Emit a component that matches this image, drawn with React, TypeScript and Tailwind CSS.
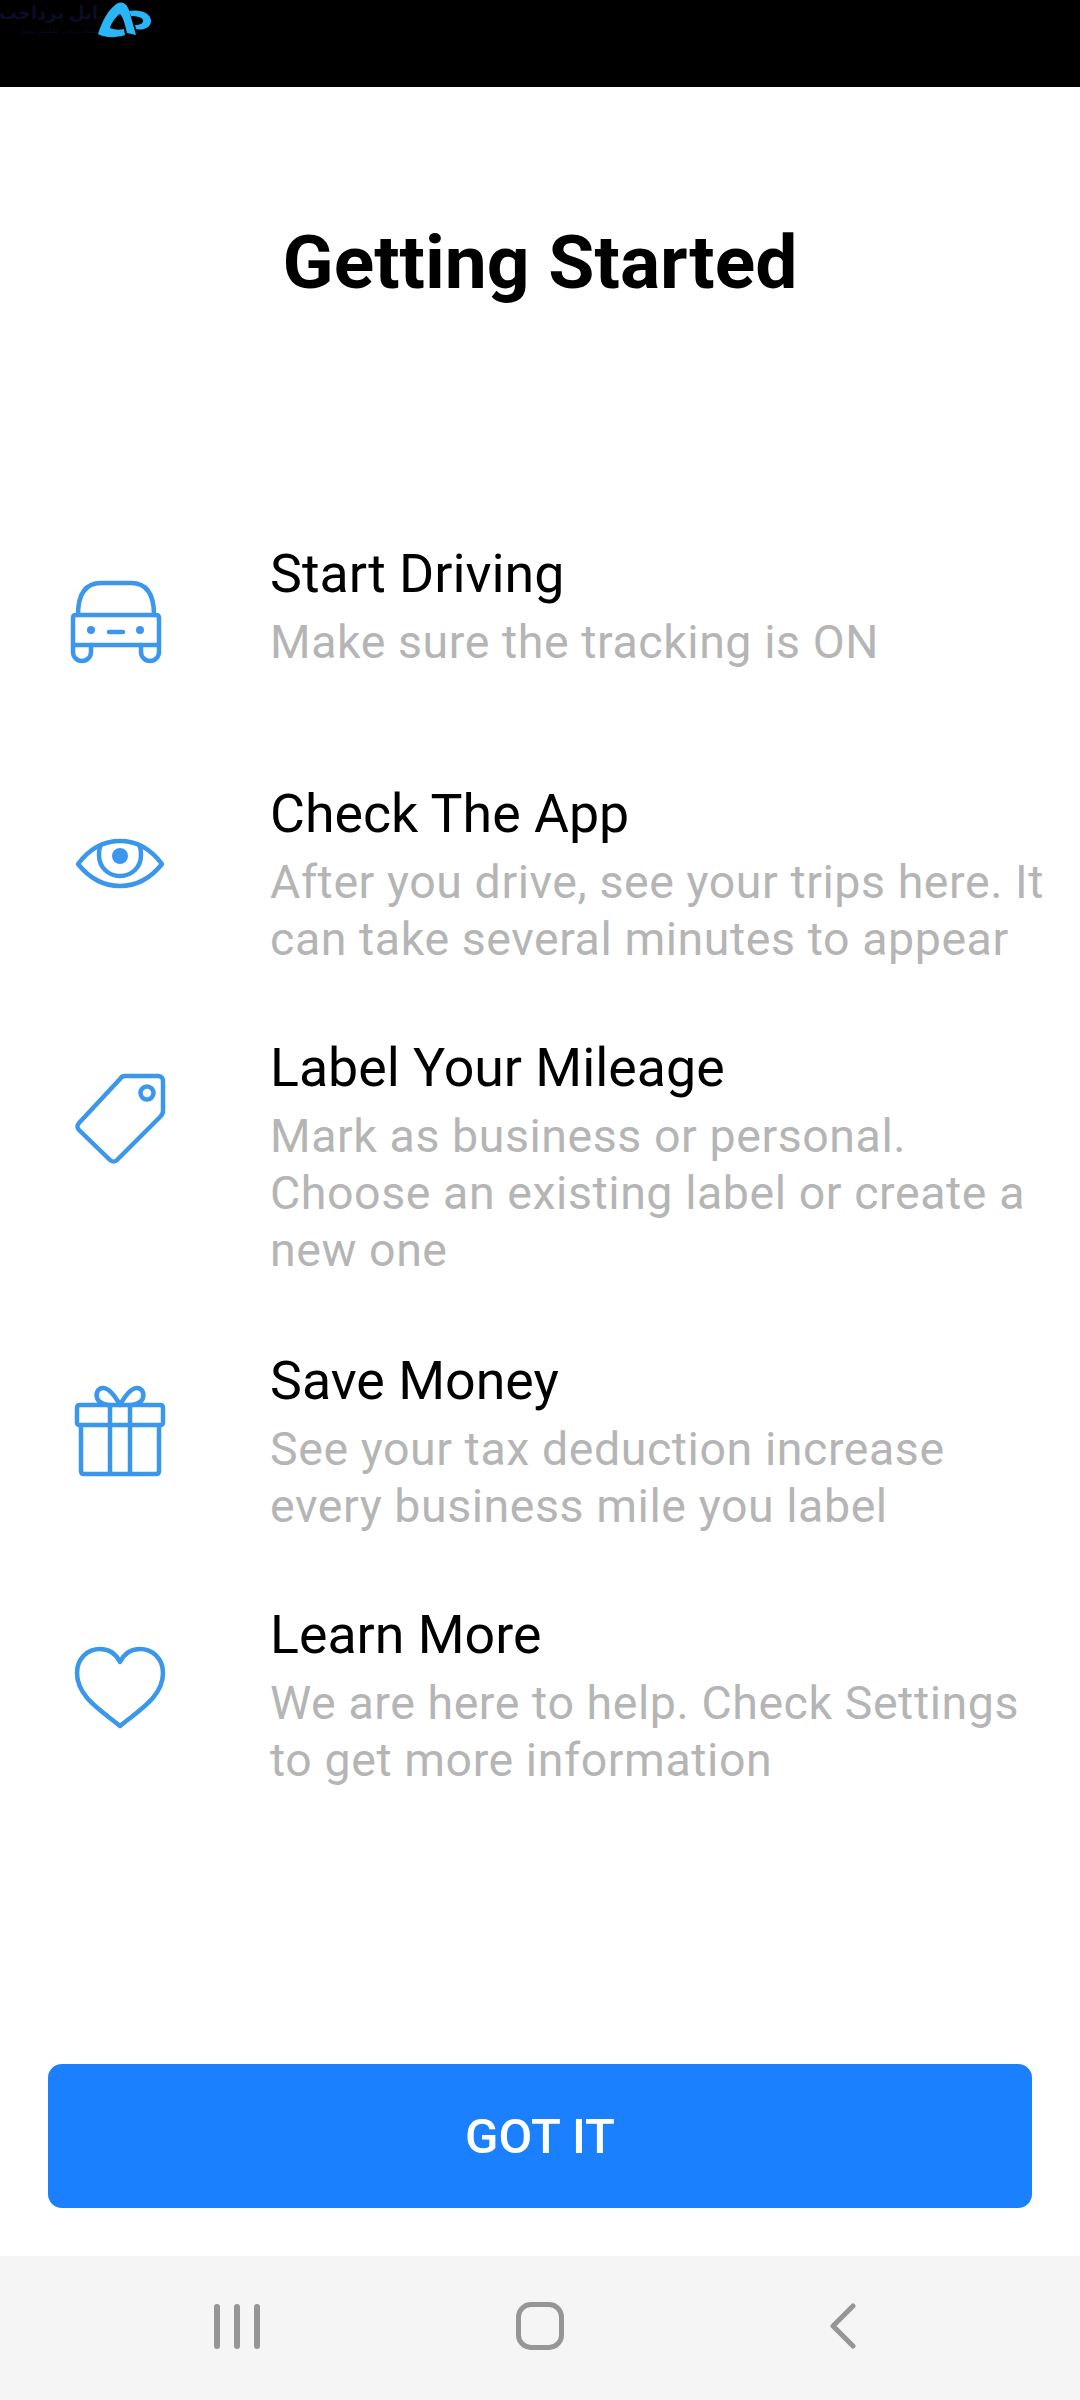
const ic = { fill: "none", stroke: "#3b97ec", strokeWidth: 4.5, strokeLinecap: "round" as const, strokeLinejoin: "round" as const };

function Car() {
  return (
    <svg width="100" height="90" viewBox="0 0 100 90" {...ic}>
      <path d="M13 38C13 18 20 6 36 6H66C82 6 89 18 89 38" />
      <path d="M8 41C8 39 9 38 11 38H91C93 38 94 39 94 41V68H8Z" />
      <path d="M8 68V75C8 80 12 84 17 84C22 84 26 80 26 75V68" />
      <path d="M76 68V75C76 80 80 84 85 84C90 84 94 80 94 75V68" />
      <circle cx="26" cy="53" r="4" fill="#3b97ec" stroke="none" />
      <circle cx="75" cy="53" r="4" fill="#3b97ec" stroke="none" />
      <path d="M44 55H58" />
    </svg>
  );
}
function Eye() {
  return (
    <svg width="100" height="60" viewBox="0 0 100 60" {...ic}>
      <path d="M8 29C20 13 35 6 50 6C65 6 80 13 92 29C80 44 65 51 50 51C35 51 20 44 8 29Z" />
      <path d="M31 10C29 13 29 17 29 20C29 32 38 41 50 41C62 41 71 32 71 20C71 17 71 13 69 10" />
      <circle cx="50" cy="21" r="8" fill="#3b97ec" stroke="none" />
    </svg>
  );
}
function Tag() {
  return (
    <svg width="100" height="100" viewBox="0 0 100 100" {...ic}>
      <path d="M9 53L50 9C51 7 53 6 55 6H88C91 6 93 8 93 11V41C93 43 92 45 90 47L47 90C45 92 42 92 40 90L9 60C7 58 7 55 9 53Z" />
      <circle cx="77" cy="23" r="6.500" />
    </svg>
  );
}
function Gift() {
  return (
    <svg width="100" height="100" viewBox="0 0 100 100" {...ic}>
      <path d="M7 26C7 24 8 23 10 23H90C92 23 93 24 93 26V41C93 42 92 43 91 43H9C8 43 7 42 7 41Z" />
      <path d="M11 43V89C11 91 12 92 14 92H86C88 92 89 91 89 89V43" />
      <path d="M40 23V92M60 23V92" />
      <path d="M50 23C45 14 39 6 33 6C27 6 25 13 28 18C30 21 34 22 38 23" />
      <path d="M50 23C55 14 61 6 67 6C73 6 75 13 72 18C70 21 66 22 62 23" />
    </svg>
  );
}
function Heart() {
  return (
    <svg width="100" height="90" viewBox="0 0 100 90" {...ic}>
      <path d="M50 81C32 66 7 52 7 28C7 13 18 4 30 4C39 4 46 9 50 17C54 9 61 4 70 4C82 4 93 13 93 28C93 52 68 66 50 81Z" />
    </svg>
  );
}
function Logo() {
  return (
    <div className="flex items-start">
      <div className="w-[96px] h-[36px] flex flex-col items-end text-[#0a0d25]" style={{ fontFamily: '"Noto Sans","DejaVu Sans",sans-serif' }}>
        <span className="text-[18px] leading-[24px] font-bold whitespace-nowrap" dir="rtl">اپل پرداخت</span>
        <span className="text-[6px] leading-[8px] mt-[3px] whitespace-nowrap" dir="rtl">سامانه پرداخت اپلیکیشن موبایل</span>
      </div>
      <svg width="54" height="36" viewBox="0 0 54 36" className="mt-[2px]">
        <path d="M0 32C4 19 11 6 20 1C25 -1 29 2 31 8L38 33L29 31C27 22 25 15 22 12C17 15 13 22 12 26C17 28 21 28 26 27L27 33C18 36 7 36 0 32Z" fill="#29b5f6" />
        <path d="M31 9C42 7 53 11 53 19C53 26 44 29 38 27L37 23C42 23 46 21 45 18C44 15 38 14 33 14Z" fill="#29b5f6" />
      </svg>
    </div>
  );
}

function Item({ title, lines, icon, h, iconClass }: { title: string; lines: string[]; icon: React.ReactNode; h: string; iconClass: string }) {
  return (
    <div className={`flex ${h}`}>
      <div className={`w-[270px] shrink-0 ${iconClass}`}>{icon}</div>
      <div className="flex-1">
        <div className="text-[53.700px] leading-[64px] text-black">{title}</div>
        <div className="text-[46.500px] leading-[57px] text-[#b5b5b5] tracking-[0.56px] mt-[8px]">
          {lines.map((l) => <div key={l} className="whitespace-nowrap">{l}</div>)}
        </div>
      </div>
    </div>
  );
}

export default function App() {
  return (
    <div className="w-[1080px] h-[2400px] bg-white flex flex-col overflow-hidden" style={{ fontFamily: 'Roboto, sans-serif' }}>
      <div className="h-[87px] bg-black shrink-0 overflow-hidden pl-[2px]"><Logo /></div>
      <h1 className="text-center text-[75px] leading-[84px] font-bold text-black mt-[133px] shrink-0">Getting Started</h1>
      <div className="mt-[238px] flex flex-col shrink-0">
        <Item title="Start Driving" lines={["Make sure the tracking is ON"]} h="h-[240px]" iconClass="pl-[65px] pt-[35px]" icon={<Car />} />
        <Item title="Check The App" lines={["After you drive, see your trips here. It", "can take several minutes to appear"]} h="h-[254px]" iconClass="pl-[70px] pt-[53px]" icon={<Eye />} />
        <Item title="Label Your Mileage" lines={["Mark as business or personal.", "Choose an existing label or create a", "new one"]} h="h-[313px]" iconClass="pl-[70px] pt-[34px]" icon={<Tag />} />
        <Item title="Save Money" lines={["See your tax deduction increase", "every business mile you label"]} h="h-[254px]" iconClass="pl-[70px] pt-[33px]" icon={<Gift />} />
        <Item title="Learn More" lines={["We are here to help. Check Settings", "to get more information"]} h="h-[255px]" iconClass="pl-[70px] pt-[42px]" icon={<Heart />} />
      </div>
      <div className="flex-1" />
      <button className="mx-[48px] h-[144px] shrink-0 rounded-[14px] bg-[#1a80fd] text-white text-[49px] font-medium pt-[2px]">GOT IT</button>
      <div className="h-[48px] shrink-0" />
      <div className="h-[144px] shrink-0 bg-[#f5f5f5] grid grid-cols-3 px-[86px] pb-[4px]">
        <div className="flex items-center justify-center gap-[14px]">
          <div className="w-[6px] h-[45px] rounded-full bg-[#969696]" />
          <div className="w-[6px] h-[45px] rounded-full bg-[#969696]" />
          <div className="w-[6px] h-[45px] rounded-full bg-[#969696]" />
        </div>
        <div className="flex items-center justify-center">
          <div className="w-[48px] h-[48px] rounded-[15px] border-[5px] border-[#969696]" />
        </div>
        <div className="flex items-center justify-center">
          <svg width="26" height="46" viewBox="0 0 26 46" fill="none" stroke="#969696" strokeWidth="5" strokeLinecap="round" strokeLinejoin="round"><path d="M23 3L3 23L23 43" /></svg>
        </div>
      </div>
    </div>
  );
}
